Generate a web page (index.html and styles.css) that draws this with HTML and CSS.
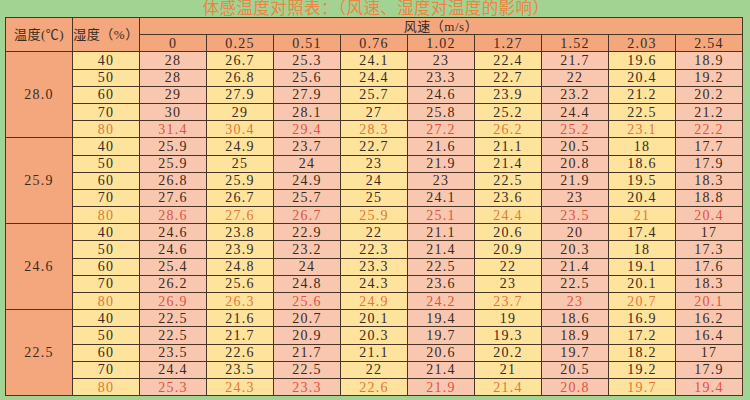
FILE: index.html
```html
<!DOCTYPE html>
<html lang="zh">
<head>
<meta charset="utf-8">
<title>体感温度对照表</title>
<link rel="stylesheet" href="styles.css">
</head>
<body>
<div class="title">体感温度对照表：（风速、湿度对温度的影响）</div>
<table class="grid">
<colgroup>
<col class="c-t"><col class="c-y"><col class="c-p"><col class="c-y"><col class="c-p"><col class="c-y"><col class="c-p"><col class="c-y"><col class="c-p"><col class="c-y"><col class="c-p">
</colgroup>
<thead>
<tr><th rowspan="2" class="hd">温度(℃)</th><th rowspan="2" class="hd">湿度（%）</th><th colspan="9" class="hd">风速（m/s）</th></tr>
<tr><th>0</th><th>0.25</th><th>0.51</th><th>0.76</th><th>1.02</th><th>1.27</th><th>1.52</th><th>2.03</th><th>2.54</th></tr>
</thead>
<tbody>
<tr><td rowspan="5" class="t">28.0</td><td>40</td><td>28</td><td>26.7</td><td>25.3</td><td>24.1</td><td>23</td><td>22.4</td><td>21.7</td><td>19.6</td><td>18.9</td></tr>
<tr><td>50</td><td>28</td><td>26.8</td><td>25.6</td><td>24.4</td><td>23.3</td><td>22.7</td><td>22</td><td>20.4</td><td>19.2</td></tr>
<tr><td>60</td><td>29</td><td>27.9</td><td>27.9</td><td>25.7</td><td>24.6</td><td>23.9</td><td>23.2</td><td>21.2</td><td>20.2</td></tr>
<tr><td>70</td><td>30</td><td>29</td><td>28.1</td><td>27</td><td>25.8</td><td>25.2</td><td>24.4</td><td>22.5</td><td>21.2</td></tr>
<tr class="hot"><td class="o">80</td><td>31.4</td><td class="o">30.4</td><td>29.4</td><td class="o">28.3</td><td>27.2</td><td class="o">26.2</td><td>25.2</td><td class="o">23.1</td><td>22.2</td></tr>

<tr><td rowspan="5" class="t">25.9</td><td>40</td><td>25.9</td><td>24.9</td><td>23.7</td><td>22.7</td><td>21.6</td><td>21.1</td><td>20.5</td><td>18</td><td>17.7</td></tr>
<tr><td>50</td><td>25.9</td><td>25</td><td>24</td><td>23</td><td>21.9</td><td>21.4</td><td>20.8</td><td>18.6</td><td>17.9</td></tr>
<tr><td>60</td><td>26.8</td><td>25.9</td><td>24.9</td><td>24</td><td>23</td><td>22.5</td><td>21.9</td><td>19.5</td><td>18.3</td></tr>
<tr><td>70</td><td>27.6</td><td>26.7</td><td>25.7</td><td>25</td><td>24.1</td><td>23.6</td><td>23</td><td>20.4</td><td>18.8</td></tr>
<tr class="hot"><td class="o">80</td><td>28.6</td><td class="o">27.6</td><td>26.7</td><td class="o">25.9</td><td>25.1</td><td class="o">24.4</td><td>23.5</td><td class="o">21</td><td>20.4</td></tr>

<tr><td rowspan="5" class="t">24.6</td><td>40</td><td>24.6</td><td>23.8</td><td>22.9</td><td>22</td><td>21.1</td><td>20.6</td><td>20</td><td>17.4</td><td>17</td></tr>
<tr><td>50</td><td>24.6</td><td>23.9</td><td>23.2</td><td>22.3</td><td>21.4</td><td>20.9</td><td>20.3</td><td>18</td><td>17.3</td></tr>
<tr><td>60</td><td>25.4</td><td>24.8</td><td>24</td><td>23.3</td><td>22.5</td><td>22</td><td>21.4</td><td>19.1</td><td>17.6</td></tr>
<tr><td>70</td><td>26.2</td><td>25.6</td><td>24.8</td><td>24.3</td><td>23.6</td><td>23</td><td>22.5</td><td>20.1</td><td>18.3</td></tr>
<tr class="hot"><td class="o">80</td><td>26.9</td><td class="o">26.3</td><td>25.6</td><td class="o">24.9</td><td>24.2</td><td class="o">23.7</td><td>23</td><td class="o">20.7</td><td>20.1</td></tr>

<tr><td rowspan="5" class="t">22.5</td><td>40</td><td>22.5</td><td>21.6</td><td>20.7</td><td>20.1</td><td>19.4</td><td>19</td><td>18.6</td><td>16.9</td><td>16.2</td></tr>
<tr><td>50</td><td>22.5</td><td>21.7</td><td>20.9</td><td>20.3</td><td>19.7</td><td>19.3</td><td>18.9</td><td>17.2</td><td>16.4</td></tr>
<tr><td>60</td><td>23.5</td><td>22.6</td><td>21.7</td><td>21.1</td><td>20.6</td><td>20.2</td><td>19.7</td><td>18.2</td><td>17</td></tr>
<tr><td>70</td><td>24.4</td><td>23.5</td><td>22.5</td><td>22</td><td>21.4</td><td>21</td><td>20.5</td><td>19.2</td><td>17.9</td></tr>
<tr class="hot"><td class="o">80</td><td>25.3</td><td class="o">24.3</td><td>23.3</td><td class="o">22.6</td><td>21.9</td><td class="o">21.4</td><td>20.8</td><td class="o">19.7</td><td>19.4</td></tr>
</tbody>
</table>
</body>
</html>
```
FILE: styles.css
```css
html, body {
  margin: 0;
  padding: 0;
  background: #a2d393;
}
body {
  width: 750px;
  height: 400px;
  overflow: hidden;
  font-family: "Liberation Serif", "Noto Sans CJK SC", serif;
  color: #3b2a1c;
}
.title {
  height: 17px;
  line-height: 17px;
  font-size: 16.5px;
  color: #ec8544;
  text-align: center;
  padding-left: 2px;
  letter-spacing: 0.4px;
  white-space: nowrap;
}
.grid {
  margin-left: 5px;
  width: 738px;
  border-collapse: collapse;
  table-layout: fixed;
  border: 1.5px solid #3e2c1e;
}
.c-t { background: #f4a77c; }
.c-y { background: #fde39b; }
.c-p { background: #f9c7b0; }
.grid th, .grid td {
  border: 1px solid #4a3524;
  padding: 0;
  height: 16.2px;
  line-height: 15px;
  font-size: 14px;
  font-weight: normal;
  text-align: center;
  letter-spacing: 1.2px;
}
.grid th {
  background: #f4a77c;
}
.grid th.hd {
  font-size: 13px;
  letter-spacing: 0.5px;
}
.grid td.t {
  background: #f4a77c;
}
.grid tr.hot td {
  color: #e1523f;
}
.grid tr.hot td.o {
  color: #e2773b;
}
```
